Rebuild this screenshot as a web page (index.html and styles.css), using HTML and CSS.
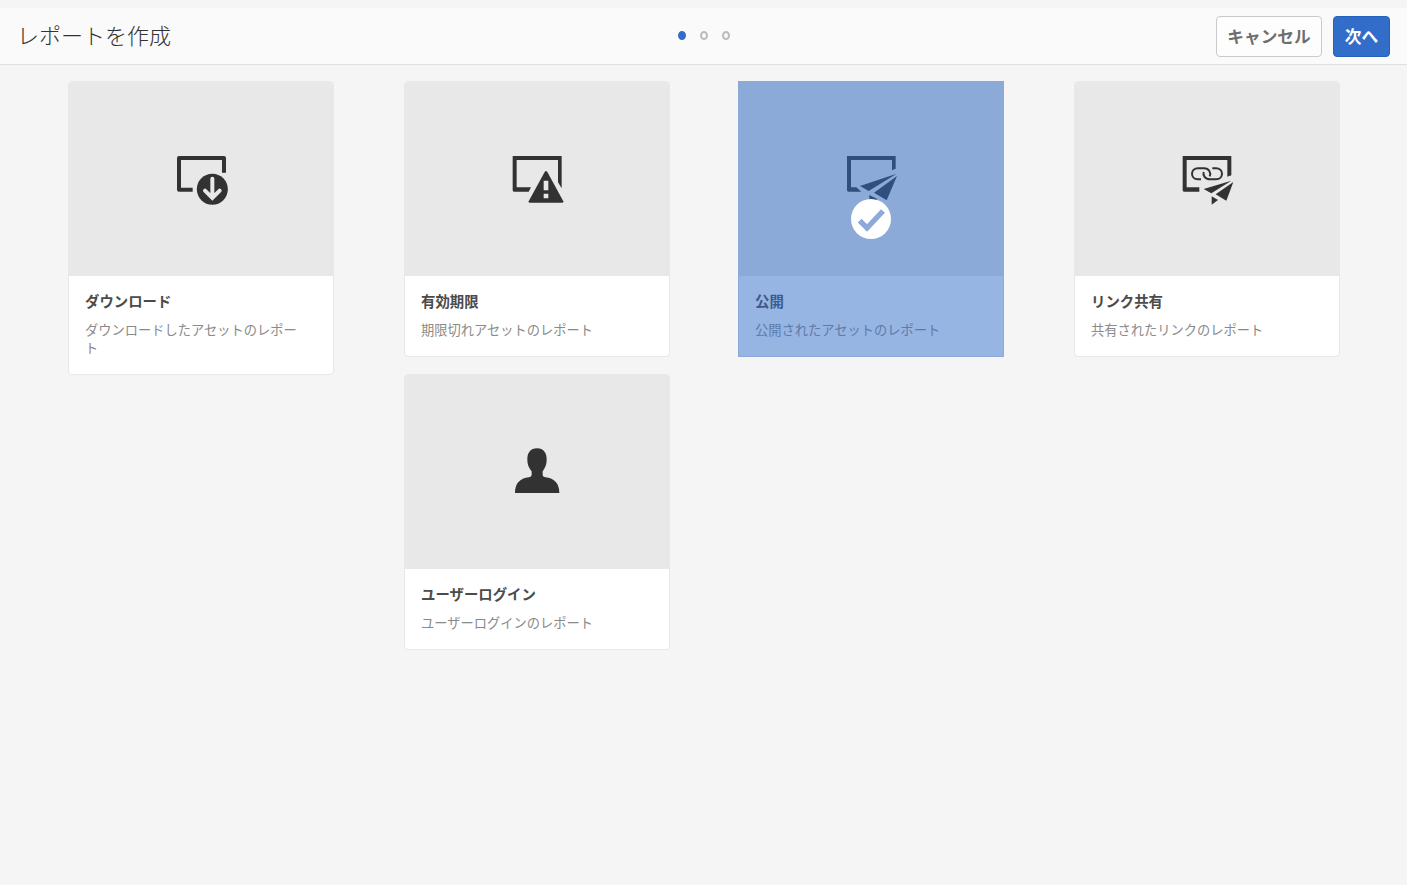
FILE: index.html
```html
<!DOCTYPE html>
<html lang="ja">
<head>
<meta charset="utf-8">
<title>レポートを作成</title>
<link rel="stylesheet" href="styles.css">
</head>
<body>
<header class="wizard-bar">
  <h1 class="wizard-title">レポートを作成</h1>
  <div class="steps"><span class="step step-active"></span><span class="step"></span><span class="step"></span></div>
  <div class="actions">
    <button class="btn">キャンセル</button>
    <button class="btn btn-primary">次へ</button>
  </div>
</header>
<main class="board">
  <div class="column">
    <article class="card">
      <div class="thumb">
        <svg class="icon" viewBox="-12 -3 270 240">
          <path class="frame" d="M98 149H57V54H192V98"/>
          <circle cx="157" cy="148" r="52" class="halo"/>
          <circle cx="157" cy="148" r="46.500"/>
          <path class="arrow" d="M157 116V172M135 152L157 174L179 152"/>
        </svg>
      </div>
      <div class="info">
        <h2>ダウンロード</h2>
        <p>ダウンロードしたアセットのレポート</p>
      </div>
    </article>
  </div>
  <div class="column">
    <article class="card">
      <div class="thumb">
        <svg class="icon" viewBox="-9 -3 270 240">
          <path d="M53 48H200V145L189 127V60H65V142H108L101 155H57Q53 155 53 151Z"/>
          <path d="M149 96Q153 90 157 96L205 184Q206 188 202 188H104Q100 188 101 184Z"/>
          <path class="mark" d="M146 122H160V151H146ZM146 161H160V175H146Z"/>
        </svg>
      </div>
      <div class="info">
        <h2>有効期限</h2>
        <p>期限切れアセットのレポート</p>
      </div>
    </article>
    <article class="card">
      <div class="thumb">
        <svg class="icon" viewBox="-9 -9 270 240">
          <path d="M126 40C146 40 155 54 155 73C155 91 149 101 143 109V120Q143 126 151 127C179 130 193 146 193 174H60C60 146 74 130 102 127Q110 126 110 120V109C103 101 97 91 97 73C97 54 106 40 126 40Z"/>
        </svg>
      </div>
      <div class="info">
        <h2>ユーザーログイン</h2>
        <p>ユーザーログインのレポート</p>
      </div>
    </article>
  </div>
  <div class="column">
    <article class="card card-selected">
      <div class="thumb">
        <svg class="icon" viewBox="-12 -3 270 240">
          <path d="M51 48H197V86L186 91V60H63V142H79L94 155H55Q51 155 51 151Z"/>
          <path d="M200 101L90 138L116 153Z"/>
          <path d="M201 108L132 158L170 181Z"/>
          <path d="M118 165L142 177L118 196Z"/>
        </svg>
      </div>
      <div class="info">
        <h2>公開</h2>
        <p>公開されたアセットのレポート</p>
      </div>
      <div class="selection">
        <svg class="check" viewBox="0 0 120 120">
          <circle cx="60" cy="60" r="60"/>
          <path d="M26 65L48 87L96 36"/>
        </svg>
      </div>
    </article>
  </div>
  <div class="column">
    <article class="card">
      <div class="thumb">
        <svg class="icon" viewBox="-9 -3 270 240">
          <path d="M53 48H199V106L187 110V60H65V142H103V155H57Q53 155 53 151Z"/>
          <path class="chain" d="M108 118H99C75 118 75 85 99 85H117C132 85 139 98 134 109M142 85H153C177 85 177 118 153 118H135C120 118 113 106 116 96"/>
          <path d="M199 122L116 147L139 160Z"/>
          <path d="M205 126L152 163L184 182Z"/>
          <path d="M140 169L159 180L140 194Z"/>
        </svg>
      </div>
      <div class="info">
        <h2>リンク共有</h2>
        <p>共有されたリンクのレポート</p>
      </div>
    </article>
  </div>
</main>
</body>
</html>
```
FILE: styles.css
```css
* { box-sizing: border-box; }
body {
  margin: 0;
  padding-top: 8px;
  min-height: 885px;
  background: #f5f5f5;
  color: #323232;
  font-family: "Open Sans", "Noto Sans CJK JP", sans-serif;
}
.wizard-bar {
  height: 57px;
  padding: 0 17px;
  display: grid;
  grid-template-columns: 1fr auto 1fr;
  align-items: center;
  background: #fafafa;
  border-bottom: 1px solid #dfdfdf;
}
.wizard-title {
  margin: 0 0 5px;
  font: 300 22px/30px "Noto Sans CJK JP", sans-serif;
}
.steps { display: flex; gap: 14px; margin-bottom: 2px; }
.step {
  width: 8px;
  height: 9px;
  border: 2px solid #bcbcbc;
  border-radius: 50%;
}
.step-active { background: #326dc9; border-color: #326dc9; }
.actions { display: flex; justify-content: flex-end; gap: 11px; }
.btn {
  width: 106px;
  height: 41px;
  padding: 0;
  border: 1px solid #cacaca;
  border-radius: 4px;
  background: #fdfdfd;
  color: #6e6e6e;
  font: 700 16.700px/38px "Noto Sans CJK JP", sans-serif;
  white-space: nowrap;
}
.btn-primary {
  width: 57px;
  background: #326dc9;
  border-color: #2261bd;
  color: #fff;
}
.board {
  display: grid;
  grid-template-columns: 336px 334px 336px 266px;
  align-items: start;
  padding: 16px 0 0 68px;
}
.column { display: grid; gap: 17px; width: 266px; }
.card {
  position: relative;
  overflow: hidden;
  background: #fff;
  border: 1px solid #e8e8e8;
  border-radius: 4px;
}
.card-selected { border-radius: 0; overflow: visible; }
.thumb {
  height: 194px;
  display: flex;
  align-items: center;
  justify-content: center;
  background: #e8e8e8;
}
.icon { width: 90px; height: 80px; fill: #323232; }
.frame { fill: none; stroke: #323232; stroke-width: 12; stroke-linejoin: round; }
.halo, .mark { fill: #e8e8e8; }
.arrow { fill: none; stroke: #e8e8e8; stroke-width: 12; stroke-linecap: round; }
.chain { fill: none; stroke: #323232; stroke-width: 6; }
.info { padding: 16px 28px 17px 16px; }
.info h2 {
  margin: 0;
  font: 700 14.400px/18px "Noto Sans CJK JP", sans-serif;
  color: #4b4b4b;
}
.info p {
  margin: 11px 0 0;
  font: 400 13.250px/18px "Noto Sans CJK JP", sans-serif;
  color: #8a8a8a;
}
.selection {
  position: absolute;
  inset: -1px;
  display: flex;
  align-items: center;
  justify-content: center;
  background: rgba(48, 108, 200, .5);
}
.check { width: 40px; height: 40px; fill: #fff; }
.check path { fill: none; stroke: #8ca9d8; stroke-width: 16; }
```
